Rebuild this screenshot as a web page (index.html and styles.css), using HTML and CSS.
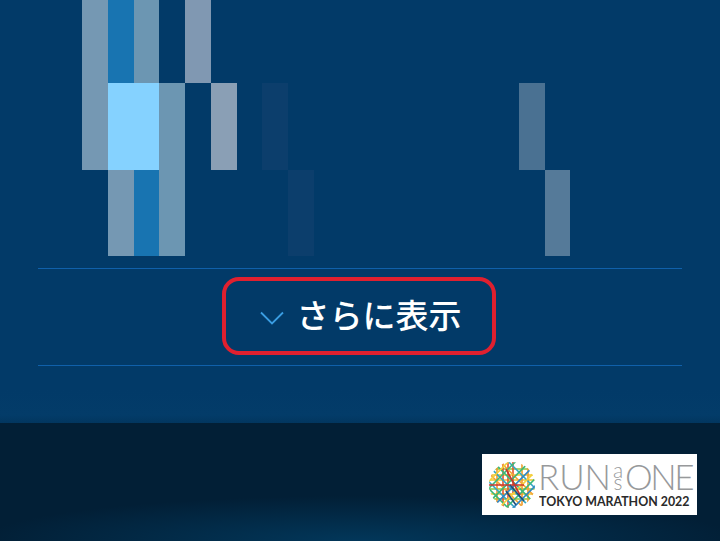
FILE: index.html
```html
<!DOCTYPE html>
<html lang="ja">
<head>
<meta charset="utf-8">
<title>さらに表示</title>
<link rel="stylesheet" href="styles.css">
</head>
<body>
<main class="panel">
  <div class="heatmap">
    <i class="c c0 r0 grey-a"></i><i class="c c1 r0 blue"></i><i class="c c2 r0 grey-b"></i><i class="c c4 r0 grey-c"></i>
    <i class="c c0 r1 grey-a"></i><i class="c c1 r1 bright wide"></i><i class="c c3 r1 grey-b"></i><i class="c c5 r1 grey-d"></i><i class="c c7 r1 faint"></i><i class="c c17 r1 mid-a"></i>
    <i class="c c1 r2 grey-a"></i><i class="c c2 r2 blue"></i><i class="c c3 r2 grey-b"></i><i class="c c8 r2 faint"></i><i class="c c18 r2 mid-b"></i>
  </div>
  <div class="more-row">
    <button class="more" type="button">
      <svg class="chevron" viewBox="0 0 24 14" width="24" height="14" aria-hidden="true"><path d="M1 1.5 12 12.5 23 1.5" fill="none" stroke="#3a9de2" stroke-width="1.8"/></svg>
      <span class="label">さらに表示</span>
    </button>
  </div>
</main>
<footer class="footer">
  <div class="logo">
    <svg class="mark" viewBox="-24 -24 48 48" width="48" height="48" aria-hidden="true">
      <defs><clipPath id="disc"><circle r="23"/></clipPath></defs>
      <g clip-path="url(#disc)" fill="none" stroke-width="1.6">
        <path stroke="#f0c52c" d="M-23-10 23-10M-23-5 23-5M-23 9 23 9"/>
        <path stroke="#8cc63f" d="M-23 14 23 14M-23 4 23 4M-23-16 23-16"/>
        <path stroke="#ef9a2b" d="M-15-23-15 23M10-23 10 23M16-23 16 23"/>
        <path stroke="#e2552c" d="M-9-23-9 23M-4-23-4 23M1-23 1 8"/>
        <g transform="rotate(45)"><path stroke="#35a8c4" d="M-23-14 23-14M-23 3 23 3M-23 14 23 14"/><path stroke="#f4a63a" d="M-23-8 23-8M-23 8 23 8"/><path stroke="#3cb878" d="M-23-3 23-3M-23 19 23 19"/></g>
        <g transform="rotate(-45)"><path stroke="#3cb878" d="M-23-14 23-14M-23-4 23-4M-23 12 23 12"/><path stroke="#f4d03a" d="M-23-19 23-19M-23 7 23 7"/><path stroke="#2f86c6" d="M-23 2 23 2M-23 17 23 17"/></g>
        <path stroke="#c9372f" d="M-23 0 12 0M-6-16 8 10"/>
        <path stroke="#1f4f7a" d="M-2 0 12 16M-6 6 4 20"/>
      </g>
    </svg>
    <div class="wordmark">
      <div class="run"><span>RUN</span><span class="as"><b>a</b><b>s</b></span><span class="one">ONE</span></div>
      <div class="tokyo">TOKYO MARATHON 2022</div>
    </div>
  </div>
</footer>
</body>
</html>
```

FILE: styles.css
```css
* { box-sizing: border-box; }
html, body { margin: 0; padding: 0; }
body {
  width: 720px;
  height: 541px;
  overflow: hidden;
  display: flex;
  flex-direction: column;
  background: #023a68;
  font-family: "Noto Sans CJK JP", "Noto Sans", sans-serif;
}
.panel {
  height: 423px;
  flex: none;
  padding: 0 38px;
  background: linear-gradient(#023a68 0, #023a68 390px, #033c69 415px, #02365f 423px);
}
.heatmap {
  display: grid;
  height: 256px;
  margin: 0 0 12px 44.4px;
  grid-template-columns: repeat(20, 25.7px);
  grid-template-rows: 83px 87px 86px;
}
.c { display: block; }
.r0 { grid-row: 1; }
.r1 { grid-row: 2; }
.r2 { grid-row: 3; }
.c0 { grid-column: 1; }
.c1 { grid-column: 2; }
.c2 { grid-column: 3; }
.c3 { grid-column: 4; }
.c4 { grid-column: 5; }
.c5 { grid-column: 6; }
.c7 { grid-column: 8; }
.c8 { grid-column: 9; }
.c17 { grid-column: 18; }
.c18 { grid-column: 19; }
.wide { grid-column: 2 / span 2; }
.grey-a { background: #7598b3; }
.grey-b { background: #6c96b2; }
.grey-c { background: #8098b2; }
.grey-d { background: #8a9fb5; }
.blue { background: #1874b1; }
.bright { background: #85d2ff; }
.faint { background: #0c3e6c; }
.mid-a { background: #4a7192; }
.mid-b { background: #557a99; }
.more-row {
  height: 98px;
  display: flex;
  justify-content: center;
  align-items: flex-start;
  padding: 8px 0 0 0;
  border-top: 1px solid #1060aa;
  border-bottom: 1px solid #1060aa;
}
.more {
  width: 274px;
  height: 78px;
  margin-right: 2px;
  display: flex;
  align-items: center;
  justify-content: center;
  gap: 13px;
  padding: 0 0 0 3px;
  background: transparent;
  border: 4px solid #e0202f;
  border-radius: 17px;
  color: #fff;
  font-family: inherit;
  font-size: 33px;
  font-weight: 500;
  line-height: 1;
}
.label { margin-bottom: 3px; }
.chevron { flex: none; margin-top: 4px; }
.footer {
  flex: 1;
  display: flex;
  justify-content: flex-end;
  align-items: flex-start;
  padding: 31px 23px 0 0;
  background:
    radial-gradient(ellipse 380px 45px at 50% 100%, #02375a 0, rgba(2, 50, 80, 0) 100%),
    #021f36;
}
.logo {
  width: 215px;
  height: 61px;
  display: flex;
  align-items: center;
  gap: 2px;
  padding: 0 0 0 6px;
  background: #fff;
}
.mark { flex: none; }
.wordmark { display: flex; flex-direction: column; }
.run {
  display: flex;
  align-items: center;
  height: 31px;
  color: #97999b;
  font-family: Lato, sans-serif;
  font-weight: 300;
  font-size: 35px;
  line-height: 1;
}
.one { letter-spacing: -2.5px; }
.as {
  display: flex;
  flex-direction: column;
  width: 14px;
  align-items: center;
  font-size: 21px;
  line-height: 12px;
}
.as b { font-weight: 300; }
.tokyo {
  margin: 1px 0 0 1px;
  color: #2a2a2a;
  font-family: Lato, sans-serif;
  font-weight: 700;
  font-size: 14px;
  line-height: 16px;
  white-space: nowrap;
  transform: scaleX(0.885);
  transform-origin: left center;
}
```
